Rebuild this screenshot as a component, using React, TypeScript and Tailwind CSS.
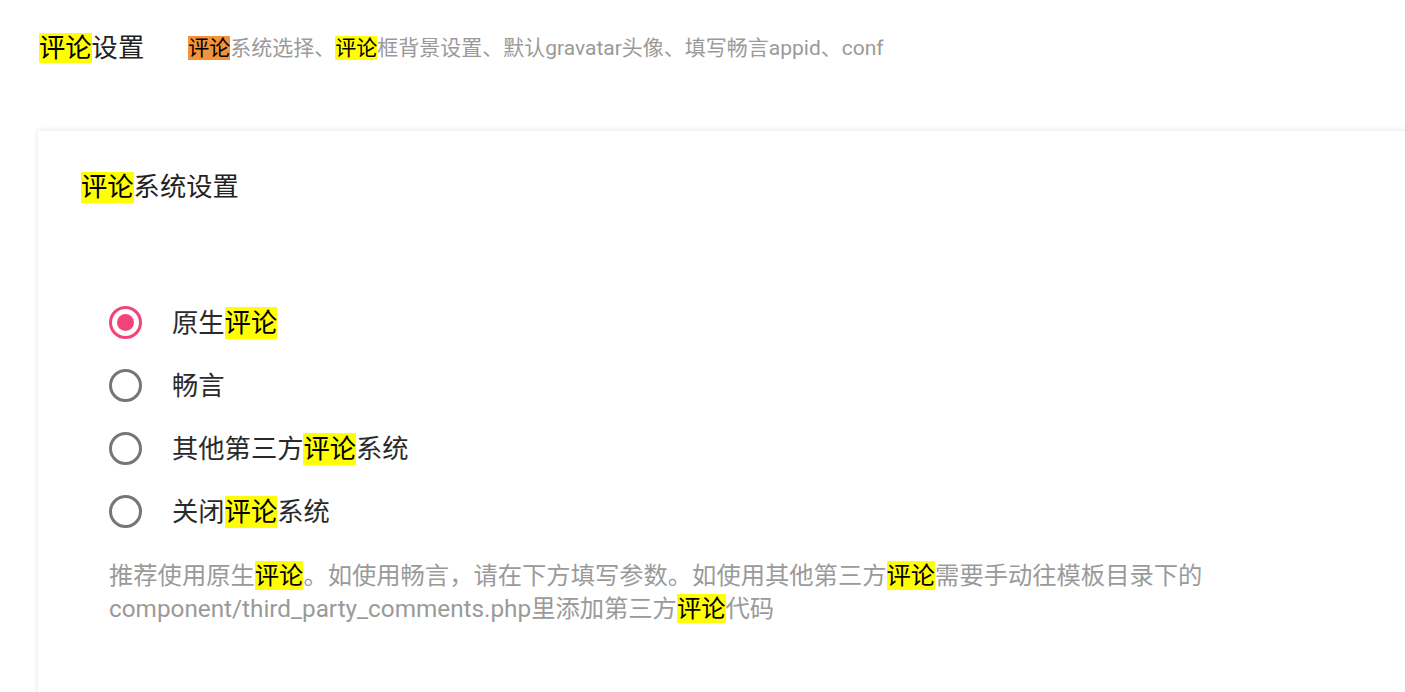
import React from "react";

const FONT = {
  fontFamily: 'Roboto, "Noto Sans CJK SC", "Noto Sans", sans-serif',
};

function Hl({ children, orange = false, h }: { children: React.ReactNode; orange?: boolean; h: string }) {
  return (
    <span
      className={`inline-block text-black ${orange ? "bg-[#f3923a]" : "bg-[#ffff00]"} ${h}`}
    >
      {children}
    </span>
  );
}

function Radio({ checked, children }: { checked?: boolean; children: React.ReactNode }) {
  return (
    <div className="flex h-[63px] items-center">
      {checked ? (
        <span className="flex h-[33px] w-[33px] items-center justify-center rounded-full border-[3px] border-[#f2437a]">
          <span className="h-[17px] w-[17px] rounded-full bg-[#f2437a]" />
        </span>
      ) : (
        <span className="h-[33px] w-[33px] rounded-full border-[3px] border-[#767676]" />
      )}
      <span className="ml-[30px] text-[26.3px] leading-[32px] text-[#2a2a2a]">{children}</span>
    </div>
  );
}

export default function App() {
  return (
    <div className="h-[692px] w-[1405px] overflow-hidden bg-white" style={FONT}>
      <div className="flex items-center pl-[39px] pt-[33px]">
        <div className="text-[26.3px] leading-[30px] text-[#222]">
          <Hl h="leading-[30px]">评论</Hl>设置
        </div>
        <div className="ml-[44px] text-[21px] leading-[24px] text-[#9a9a9a]">
          <Hl orange h="leading-[24px]">评论</Hl>系统选择、<Hl h="leading-[24px]">评论</Hl>框背景设置、默认gravatar头像、填写畅言appid、conf
        </div>
      </div>

      <div className="ml-[38px] mt-[68px] h-[600px] w-[1420px] bg-white pl-[43px] pt-[41px] shadow-[0_0_6px_rgba(0,0,0,0.12)]">
        <div className="text-[26.3px] leading-[31px] text-[#222]">
          <Hl h="leading-[31px]">评论</Hl>系统设置
        </div>
        <div className="mt-[88px] pl-[28px]">
          <Radio checked>
            原生<Hl h="leading-[32px]">评论</Hl>
          </Radio>
          <Radio>畅言</Radio>
          <Radio>
            其他第三方<Hl h="leading-[32px]">评论</Hl>系统
          </Radio>
          <Radio>
            关闭<Hl h="leading-[32px]">评论</Hl>系统
          </Radio>
          <p className="mt-[16px] w-[1120px] text-[24.3px] leading-[33px] text-[#9a9a9a]">
            推荐使用原生<Hl h="leading-[29px]">评论</Hl>。如使用畅言，请在下方填写参数。如使用其他第三方
            <Hl h="leading-[29px]">评论</Hl>需要手动往模板目录下的component/third_party_comments.php里添加第三方
            <Hl h="leading-[29px]">评论</Hl>代码
          </p>
        </div>
      </div>
    </div>
  );
}
